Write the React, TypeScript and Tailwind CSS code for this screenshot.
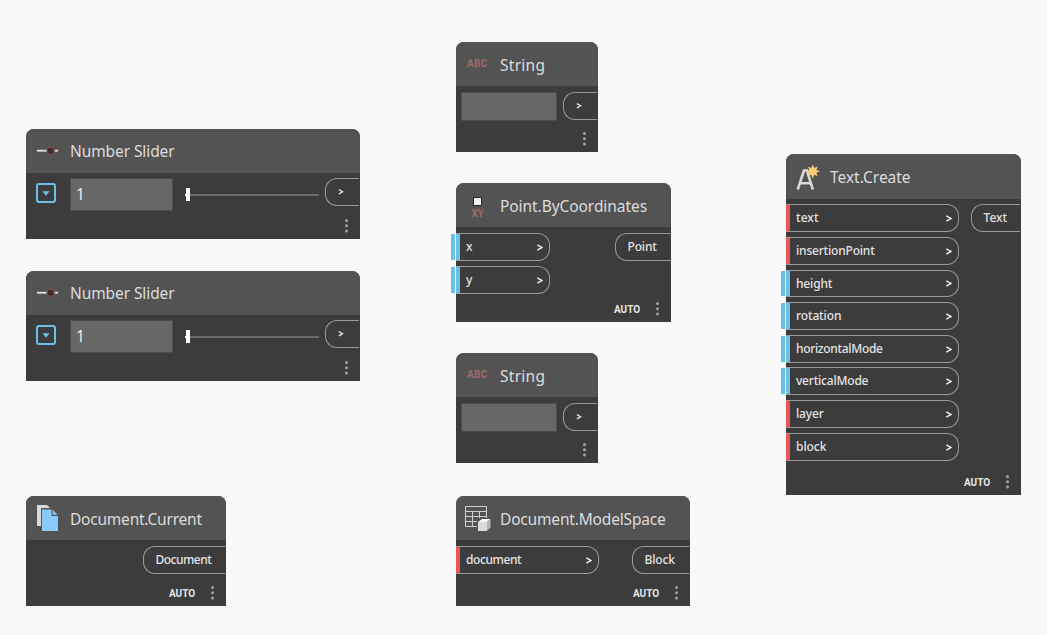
import { useLayoutEffect, useRef, useState, type ReactNode } from "react";

/** One line of text whose tracking is set so that it spans `width` pixels. */
function Label({ children, width, className = "" }: { children: string; width: number; className?: string }) {
  const ref = useRef<HTMLSpanElement>(null);
  const [spacing, setSpacing] = useState(0);
  useLayoutEffect(() => {
    const el = ref.current;
    if (!el) return;
    const natural = el.getBoundingClientRect().width - spacing * children.length;
    setSpacing((width + 1.3 - natural) / children.length);
  }, [children, width]);
  return (
    <span ref={ref} className={`inline-block whitespace-pre ${className}`} style={{ letterSpacing: `${spacing}px` }}>
      {children}
    </span>
  );
}

function Node({
  place,
  icon,
  title,
  titleWidth,
  headerClass = "h-11",
  titleClass = "pt-[2px]",
  auto = false,
  children,
}: {
  place: string;
  icon: ReactNode;
  title: string;
  titleWidth: number;
  headerClass?: string;
  titleClass?: string;
  auto?: boolean;
  children: ReactNode;
}) {
  return (
    <section className={`absolute flex flex-col rounded-t-[8px] bg-[#3c3c3c] ${place}`}>
      <header className={`flex shrink-0 items-center rounded-t-[8px] bg-[#535353] ${headerClass}`}>
        <div className="flex h-11 w-11 shrink-0">{icon}</div>
        <h2 className={`text-[15.5px] leading-5 text-[#dcdcdc] ${titleClass}`}>
          <Label width={titleWidth}>{title}</Label>
        </h2>
      </header>
      {children}
      <footer className="mt-auto flex h-[21px] items-center justify-end gap-4 pr-3 pb-[5px]">
        {auto && (
          <Label width={24.7} className="pt-px font-[Roboto,sans-serif] text-[10px] leading-3 font-bold text-[#e6e6e6]">
            AUTO
          </Label>
        )}
        <Dots />
      </footer>
    </section>
  );
}

function Dots() {
  return (
    <svg width="3" height="14" viewBox="0 0 3 14" fill="#a3a3a3">
      <circle cx="1.5" cy="1.6" r="1.5" />
      <circle cx="1.5" cy="6.8" r="1.5" />
      <circle cx="1.5" cy="12" r="1.5" />
    </svg>
  );
}

function Input({
  name,
  width,
  optional = false,
  className = "h-7",
}: {
  name: string;
  width: number;
  optional?: boolean;
  className?: string;
}) {
  return (
    <div
      className={`relative flex items-center rounded-r-[12px] border border-l-0 border-[#9a9a9a] pr-[6px] text-[12px] leading-4 text-[#e3e3e3] ${className}`}
    >
      {optional && <i className="absolute inset-y-0 -left-[5px] w-1 bg-[#6ac0e7]" />}
      <div className={`mr-[6px] w-1 self-stretch ${optional ? "bg-[#6ac0e7]" : "bg-[#eb5555]"}`} />
      <Label width={width} className="mr-auto font-medium">
        {name}
      </Label>
      <Chevron className="h-[7px] w-[6px]" />
    </div>
  );
}

function Chevron({ className }: { className: string }) {
  return (
    <svg className={className} viewBox="0 0 6 7" fill="none" stroke="#ececec" strokeWidth="1.5">
      <path d="M.3 .8 5.1 3.5 .3 6.2" />
    </svg>
  );
}

function Output({ children, className = "" }: { children: ReactNode; className?: string }) {
  return (
    <div
      className={`flex h-7 shrink-0 items-center rounded-l-[12px] border border-r-0 border-[#9a9a9a] pl-[11.5px] text-[12px] leading-4 font-medium text-[#e3e3e3] ${className}`}
    >
      {children}
    </div>
  );
}

function SliderNode({ place }: { place: string }) {
  return (
    <Node
      place={place}
      title="Number Slider"
      titleWidth={103.3}
      titleClass="pt-0"
      icon={
        <svg width="43" height="44" viewBox="0 0 43 44">
          <rect x="11" y="20.8" width="21" height="1.8" fill="#e4e4e4" />
          <circle cx="24.6" cy="21.7" r="3.6" fill="#3a2e2e" stroke="#8e4646" strokeWidth="1.3" />
        </svg>
      }
    >
      <div className="flex pt-[5px]">
        <div className="mt-[5px] ml-[10px] flex size-5 items-center justify-center rounded-[3px] border-2 border-[#6ac0e7]">
          <svg width="8" height="5" viewBox="0 0 8 5" fill="#6ac0e7">
            <path d="M.5 .3h7L4 4.7z" />
          </svg>
        </div>
        <div className="ml-[14px] flex h-[33px] w-[103px] items-center border border-[#4b4b4b] bg-[#676767] pl-[5px] text-[15.5px] text-[#ededed]">
          1
        </div>
        <div className="ml-3 flex h-[33px] w-[134px] items-center">
          <div className="h-[2px] w-px bg-white" />
          <div className="h-[13px] w-1 bg-white" />
          <div className="h-[2px] flex-1 bg-[#6a6a6a]" />
        </div>
        <Output className="ml-[6px] w-[34px]">
          <Chevron className="ml-[0.5px] h-[5.5px] w-[6px]" />
        </Output>
      </div>
    </Node>
  );
}

function StringNode({ place }: { place: string }) {
  return (
    <Node
      place={place}
      title="String"
      titleWidth={44}
      icon={
        <Label
          width={19.3}
          className="mt-[15px] ml-[11px] font-[Roboto,sans-serif] text-[10px] leading-[14px] font-bold text-[#a06868]"
        >
          ABC
        </Label>
      }
    >
      <div className="flex pt-[6px] pl-[5px]">
        <div className="h-[29px] w-24 border border-[#4b4b4b] bg-[#676767]" />
        <Output className="ml-[6px] w-[34px]">
          <Chevron className="ml-[0.5px] h-[5.5px] w-[6px]" />
        </Output>
      </div>
    </Node>
  );
}

const textInputs = [
  { name: "text", width: 21.3, optional: false, className: "h-7" },
  { name: "insertionPoint", width: 77.3, optional: false, className: "mt-[5px] h-7" },
  { name: "height", width: 35, optional: true, className: "mt-[5px] h-[27px]" },
  { name: "rotation", width: 44, optional: true, className: "mt-[5px] h-7" },
  { name: "horizontalMode", width: 85.3, optional: true, className: "mt-[5px] h-7" },
  { name: "verticalMode", width: 71, optional: true, className: "mt-[4px] h-7" },
  { name: "layer", width: 26.5, optional: false, className: "mt-[5px] h-7" },
  { name: "block", width: 29, optional: false, className: "mt-[5px] h-7" },
];

export default function App() {
  return (
    <main className="relative h-[635px] w-[1047px] overflow-hidden bg-[#f9f9f9] font-['Noto_Sans',sans-serif]">
      <SliderNode place="left-[26px] top-[129px] h-[110px] w-[334px]" />
      <SliderNode place="left-[26px] top-[271px] h-[110px] w-[334px]" />
      <StringNode place="left-[456px] top-[42px] h-[110px] w-[142px]" />
      <StringNode place="left-[456px] top-[353px] h-[110px] w-[142px]" />

      <Node
        place="left-[456px] top-[183px] h-[139px] w-[215px]"
        title="Point.ByCoordinates"
        titleWidth={145.7}
        auto
        icon={
          <div className="flex w-[43px] flex-col items-center pt-[14px]">
            <div className="size-[9px] border border-[#292929] bg-[#f0f0f0]" />
            <Label
              width={10.5}
              className="mt-[1px] font-[Roboto,sans-serif] text-[10px] leading-[13px] font-bold text-[#a06868]"
            >
              XY
            </Label>
          </div>
        }
      >
        <div className="flex items-start justify-between pt-[6px]">
          <div className="w-[94px]">
            <Input name="x" width={5.7} optional />
            <Input name="y" width={6} optional className="mt-[5px] h-7" />
          </div>
          <Output className="w-14">
            <Label width={28}>Point</Label>
          </Output>
        </div>
      </Node>

      <Node
        place="left-[786px] top-[154px] h-[341px] w-[235px]"
        title="Text.Create"
        titleWidth={79.3}
        headerClass="h-[45px]"
        titleClass="pt-0"
        auto
        icon={
          <svg width="43" height="44" viewBox="0 0 43 44">
            <path
              d="M11.7 34.5 18 15.5h3L26.8 34.5M14 28.3h11"
              fill="none"
              stroke="#d8d8d8"
              strokeWidth="2.6"
            />
            <path
              d="m26.8 9.4 1.5 3.6 3.4-1.6-1.5 3.5 4 1.4-4 1.4 1.5 3.5-3.4-1.5-1.5 3.9-1.5-3.9-3.4 1.5 1.5-3.5-3.9-1.4 3.9-1.4-1.5-3.5 3.4 1.6z"
              fill="#fcce7c"
            />
          </svg>
        }
      >
        <div className="flex items-start justify-between pt-[5px] pr-px">
          <div className="w-[173px]">
            {textInputs.map((port) => (
              <Input key={port.name} {...port} />
            ))}
          </div>
          <Output className="w-[49px]">
            <Label width={22.3}>Text</Label>
          </Output>
        </div>
      </Node>

      <Node
        place="left-[26px] top-[496px] h-[110px] w-[200px]"
        title="Document.Current"
        titleWidth={130.5}
        auto
        icon={
          <svg width="43" height="44" viewBox="0 0 43 44">
            <path d="M11 9h10l4 4v17H11z" fill="#dadada" />
            <path d="M15 12h11.5l7 7v17H15z" fill="#535353" />
            <path d="M16 13.5h9.5v6.5H32v15H16z" fill="#8ac9fb" />
            <path d="M26.7 13.8v5h5z" fill="#8ac9fb" />
          </svg>
        }
      >
        <div className="flex justify-end pt-[6px] pr-px">
          <Output className="w-[82px]">
            <Label width={54.5}>Document</Label>
          </Output>
        </div>
      </Node>

      <Node
        place="left-[456px] top-[496px] h-[110px] w-[234px]"
        title="Document.ModelSpace"
        titleWidth={164.3}
        auto
        icon={
          <svg width="43" height="44" viewBox="0 0 43 44">
            <path
              d="M9.5 10.5h21v20h-21zM9.5 15.5h21M9.5 20.5h21M9.5 25.5h21M16.5 15.5v15M23.5 15.5v15"
              fill="none"
              stroke="#d0d0d0"
            />
            <path d="M21 22h14v14H21z" fill="#535353" />
            <path d="m22 26 4-3h8.5l-3.5 3z" fill="#fafafa" />
            <path d="M22 26h9v9h-9z" fill="#dadada" />
            <path d="m31 26 3.5-3v8.5L31 35z" fill="#b4b4b4" />
          </svg>
        }
      >
        <div className="flex items-start justify-between pt-[6px] pr-px">
          <div className="w-[143px]">
            <Input name="document" width={54} />
          </div>
          <Output className="w-[57px]">
            <Label width={29}>Block</Label>
          </Output>
        </div>
      </Node>
    </main>
  );
}
